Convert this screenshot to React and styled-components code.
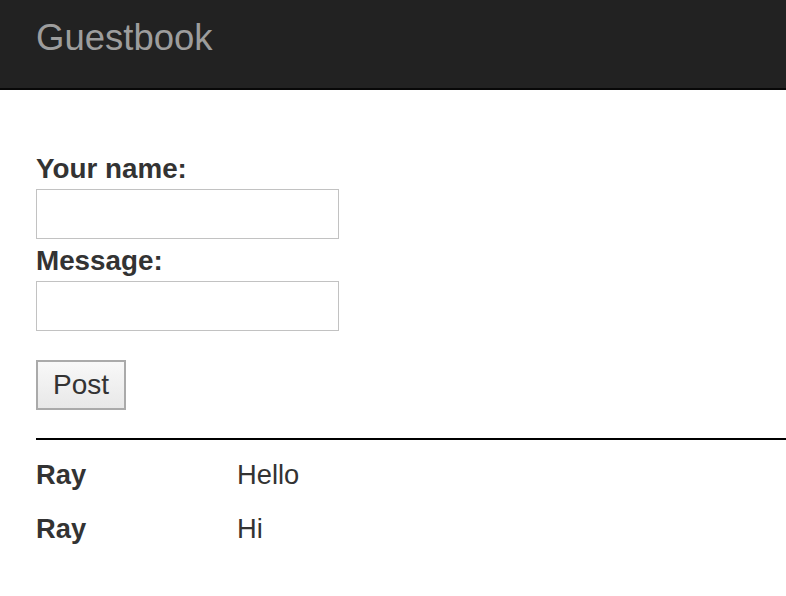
import React from "react";
import styled, { createGlobalStyle } from "styled-components";

const GlobalStyle = createGlobalStyle`
    body {
        margin: 0;
        background: #fff;
        font-family: "Liberation Sans", Arial, sans-serif;
        color: #333;
        overflow: hidden;
    }
`

const entries = [
    { name: "Ray", message: "Hello" },
    { name: "Ray", message: "Hi" },
];

export default function App() {
    return (
        <>
            <GlobalStyle />
            <NavBar>
                <Brand>Guestbook</Brand>
            </NavBar>
            <Main>
                <form onSubmit={(e) => e.preventDefault()}>
                    <Label htmlFor="name">Your name:</Label>
                    <Input id="name" type="text" />
                    <Label htmlFor="message" $spaced>Message:</Label>
                    <Input id="message" type="text" />
                    <PostButton type="submit">Post</PostButton>
                </form>
                <Divider />
                <EntryList>
                    {entries.map((entry, i) => (
                        <EntryRow key={i}>
                            <EntryName>{entry.name}</EntryName>
                            <EntryText>{entry.message}</EntryText>
                        </EntryRow>
                    ))}
                </EntryList>
            </Main>
        </>
    );
}

const NavBar = styled.nav`
    height: 88px;
    background-color: #222;
    border-bottom: 2px solid #080808;
    padding-left: 36px;
    box-sizing: content-box;
`

const Brand = styled.div`
    padding-top: 20px;
    font-size: 36.5px;
    line-height: 36px;
    color: #9d9d9d;
`

const Main = styled.main`
    padding: 60px 0 0 36px;
`

const Label = styled.label`
    display: block;
    font-size: 27.8px;
    font-weight: bold;
    line-height: 38px;
    margin-top: ${props => props.$spaced ? "3px" : "0"};
    margin-bottom: 1px;
`

const Input = styled.input`
    display: block;
    box-sizing: border-box;
    width: 303px;
    height: 50px;
    margin: 0;
    border: 1px solid #c2c2c2;
    background: #fff;
    font-size: 27px;
    font-family: inherit;
    padding: 0 8px;

    &:focus {
        outline: none;
    }
`

const PostButton = styled.button`
    display: flex;
    align-items: center;
    justify-content: center;
    box-sizing: border-box;
    width: 90px;
    height: 50px;
    margin-top: 29px;
    padding: 0;
    border: 2px solid #aaa;
    background: linear-gradient(#f8f8f8, #e8e8e8);
    font-family: inherit;
    font-size: 28px;
    color: #333;
`

const Divider = styled.hr`
    margin: 28px 0 8px;
    border: none;
    border-top: 2px solid #000;
    height: 0;
`

const EntryList = styled.div`
    display: flex;
    flex-direction: column;
`

const EntryRow = styled.div`
    display: grid;
    grid-template-columns: 201px 1fr;
    padding: 8px 0;
    font-size: 27.3px;
    line-height: 38px;
`

const EntryName = styled.div`
    font-weight: bold;
`

const EntryText = styled.div`
`
